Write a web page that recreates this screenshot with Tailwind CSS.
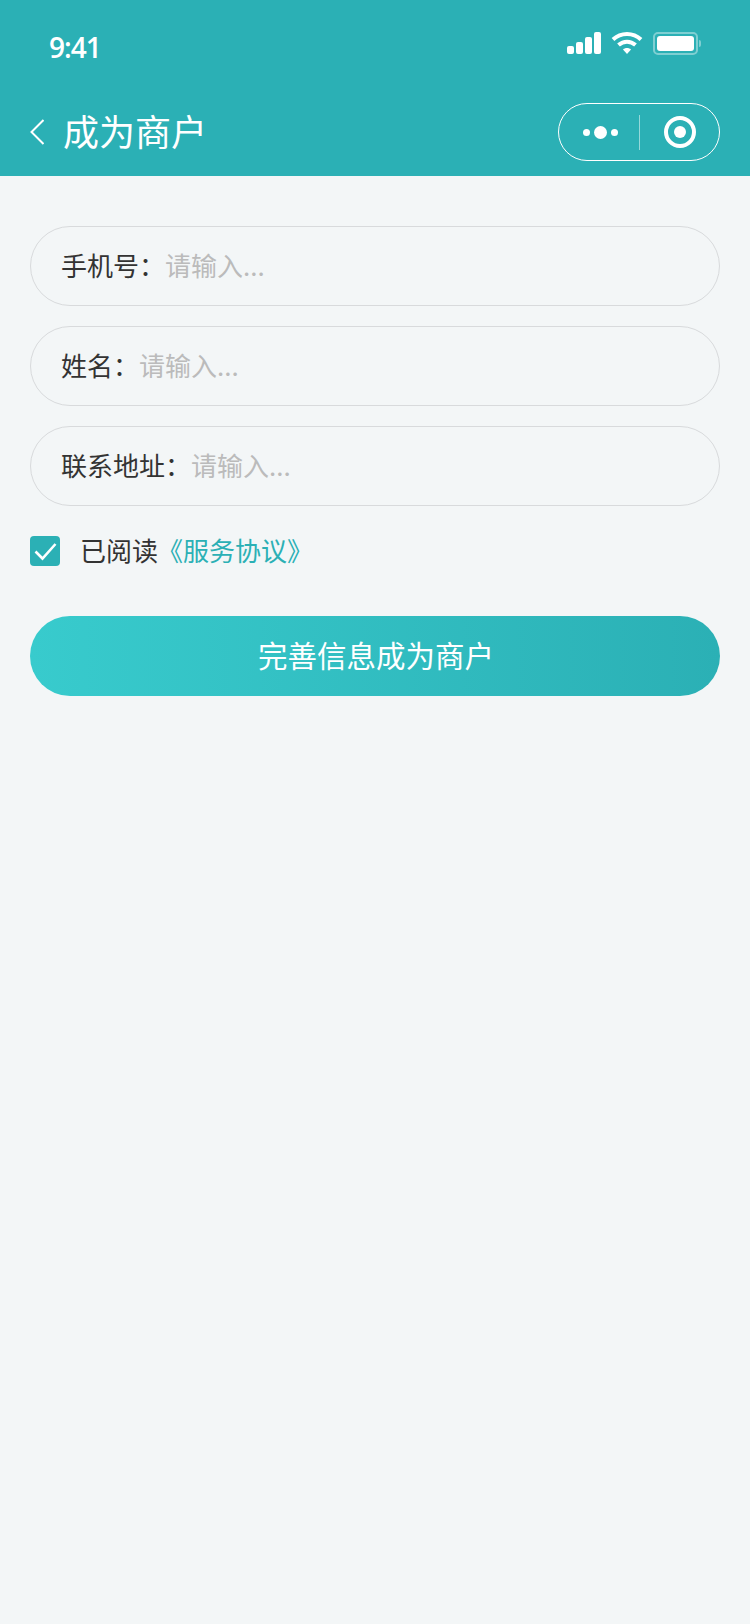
<!DOCTYPE html>
<html lang="zh-CN">
<head>
  <meta charset="utf-8" />
  <meta name="viewport" content="width=device-width, initial-scale=1" />
  <title>成为商户</title>
  <script src="https://cdn.jsdelivr.net/npm/@tailwindcss/browser@4"></script>
</head>
<body class="bg-[#f3f6f7] min-h-screen font-['Noto_Sans_CJK_SC','Noto_Sans',sans-serif]">

  <!-- Header -->
  <header class="bg-[#2bb0b5] h-[176px] text-white flex flex-col">
    <!-- Status bar -->
    <div class="h-[88px] flex items-start justify-between pl-[49px] pr-[49px] pt-[26px]">
      <span class="text-[28px] leading-[42px] font-semibold tracking-[-1px] font-['Open_Sans',sans-serif]">9:41</span>
      <div class="flex items-center gap-[10px] pt-[5px]">
        <svg width="34" height="22" viewBox="0 0 34 22" fill="#fff">
          <rect x="0" y="14" width="7" height="8" rx="2" />
          <rect x="9" y="10" width="7" height="12" rx="2" />
          <rect x="18" y="5" width="7" height="17" rx="2" />
          <rect x="27" y="0" width="7" height="22" rx="2" />
        </svg>
        <svg width="32" height="24" viewBox="0 0 32 24" fill="none" stroke="#fff" stroke-width="4">
          <path d="M2 8.5C10 1 22 1 30 8.5" />
          <path d="M7.5 14C12.5 9.5 19.5 9.5 24.5 14" />
          <path d="M12 18.5L16 23L20 18.5C18 16.5 14 16.5 12 18.5Z" fill="#fff" stroke="none" />
        </svg>
        <div class="flex items-center gap-[1px]">
          <div class="w-[45px] h-[23px] rounded-[5px] border-2 border-white/40 p-[2px]">
            <div class="w-full h-full bg-white rounded-[3px]"></div>
          </div>
          <div class="w-[2px] h-[7px] bg-white/40 rounded-r-full"></div>
        </div>
      </div>
    </div>

    <!-- Nav bar -->
    <div class="h-[88px] flex items-center justify-between pl-[30px] pr-[30px]">
      <div class="flex items-center gap-[19px]">
        <svg width="14" height="26" viewBox="0 0 14 26" fill="none" stroke="#fff" stroke-width="2">
          <path d="M13.5 1L1.5 13L13.5 25" />
        </svg>
        <h1 class="text-[36px] leading-[50px] font-normal mb-[4px]">成为商户</h1>
      </div>
      <!-- Capsule -->
      <div class="w-[162px] h-[58px] rounded-full border border-white flex items-center">
        <div class="w-[80px] flex items-center justify-center gap-[4px] pl-[2px]">
          <span class="w-[7px] h-[7px] rounded-full bg-white"></span>
          <span class="w-[13px] h-[13px] rounded-full bg-white"></span>
          <span class="w-[7px] h-[7px] rounded-full bg-white"></span>
        </div>
        <div class="w-px h-[35px] bg-white/50"></div>
        <div class="flex-1 flex items-center justify-center">
          <div class="w-[32px] h-[32px] rounded-full border-[4px] border-white flex items-center justify-center">
            <span class="w-[12px] h-[12px] rounded-full bg-white"></span>
          </div>
        </div>
      </div>
    </div>
  </header>

  <!-- Form -->
  <main class="px-[30px] pt-[50px]">
    <div class="flex flex-col gap-[20px]">
      <div class="h-[80px] rounded-full border border-[#d8dadc] flex items-center pl-[30px] text-[26px]">
        <span class="text-[#333] mb-[4px]">手机号：</span>
        <span class="text-[#bbb] mb-[4px]">请输入...</span>
      </div>
      <div class="h-[80px] rounded-full border border-[#d8dadc] flex items-center pl-[30px] text-[26px]">
        <span class="text-[#333] mb-[4px]">姓名：</span>
        <span class="text-[#bbb] mb-[4px]">请输入...</span>
      </div>
      <div class="h-[80px] rounded-full border border-[#d8dadc] flex items-center pl-[30px] text-[26px]">
        <span class="text-[#333] mb-[4px]">联系地址：</span>
        <span class="text-[#bbb] mb-[4px]">请输入...</span>
      </div>
    </div>

    <!-- Agreement -->
    <div class="flex items-center mt-[30px] h-[30px]">
      <div class="w-[30px] h-[30px] rounded-[4px] bg-[#2bb0b5] flex items-center justify-center">
        <svg width="23" height="19" viewBox="0 0 23 19" fill="none" stroke="#fff" stroke-width="2.6">
          <path d="M1.5 9.5L8.5 16.5L21.5 2" />
        </svg>
      </div>
      <span class="ml-[20px] text-[26px] text-[#333] mb-[4px]">已阅读</span>
      <span class="text-[26px] text-[#2bb0b5] mb-[4px] -ml-px">《服务协议》</span>
    </div>

    <button class="mt-[50px] w-full h-[80px] pb-[4px] pl-[2px] rounded-full bg-linear-to-r from-[#38cbcd] to-[#2bb0b5] text-white text-[29.5px]">
      完善信息成为商户
    </button>
  </main>

</body>
</html>
